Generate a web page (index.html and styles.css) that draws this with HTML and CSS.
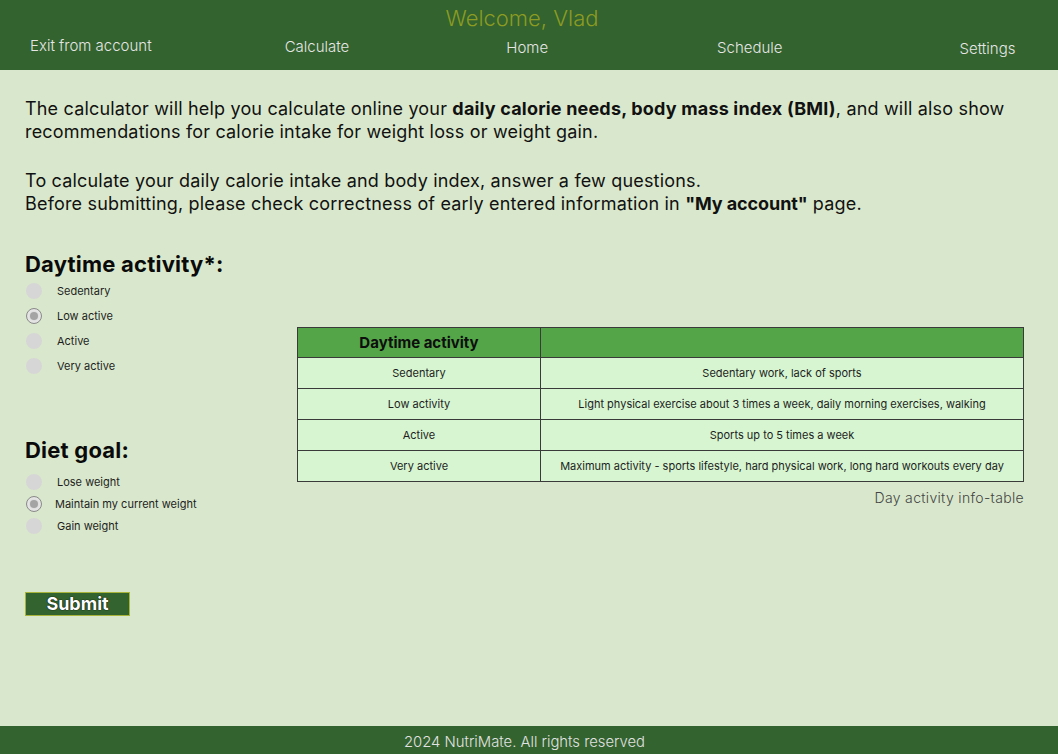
FILE: index.html
```html
<!DOCTYPE html>
<html lang="en">
<head>
<meta charset="utf-8">
<title>NutriMate - Calculate</title>
<link rel="stylesheet" href="styles.css">
</head>
<body>
<header class="topbar">
  <div class="welcome">Welcome, Vlad</div>
  <nav class="nav">
    <a class="nav-item nav-exit" href="#">Exit from account</a>
    <a class="nav-item nav-calc" href="#">Calculate</a>
    <a class="nav-item nav-home" href="#">Home</a>
    <a class="nav-item nav-sched" href="#">Schedule</a>
    <a class="nav-item nav-settings" href="#">Settings</a>
  </nav>
</header>

<main class="main">
  <p class="intro">The calculator will help you calculate online your <b>daily calorie needs, body mass index (BMI)</b>, and will also show recommendations for calorie intake for weight loss or weight gain.</p>
  <p class="intro intro-2">To calculate your daily calorie intake and body index, answer a few questions.<br>Before submitting, please check correctness of early entered information in <b class="acct">"My account"</b> page.</p>

  <div class="content">
    <form class="forms">
      <h2 class="group-title">Daytime activity*:</h2>
      <div class="radio-list activity">
        <label class="radio"><span class="dot"></span><span class="lbl">Sedentary</span></label>
        <label class="radio"><span class="dot checked"></span><span class="lbl">Low active</span></label>
        <label class="radio"><span class="dot"></span><span class="lbl">Active</span></label>
        <label class="radio"><span class="dot"></span><span class="lbl">Very active</span></label>
      </div>

      <h2 class="group-title diet-title">Diet goal:</h2>
      <div class="radio-list diet">
        <label class="radio"><span class="dot"></span><span class="lbl">Lose weight</span></label>
        <label class="radio"><span class="dot checked"></span><span class="lbl lbl-tight">Maintain my current weight</span></label>
        <label class="radio"><span class="dot"></span><span class="lbl">Gain weight</span></label>
      </div>

      <button type="button" class="submit">Submit</button>
    </form>

    <div class="table-wrap">
      <table class="info">
        <thead>
          <tr><th class="col-a">Daytime activity</th><th></th></tr>
        </thead>
        <tbody>
          <tr><td>Sedentary</td><td>Sedentary work, lack of sports</td></tr>
          <tr><td>Low activity</td><td>Light physical exercise about 3 times a week, daily morning exercises, walking</td></tr>
          <tr><td>Active</td><td>Sports up to 5 times a week</td></tr>
          <tr><td>Very active</td><td>Maximum activity - sports lifestyle, hard physical work, long hard workouts every day</td></tr>
        </tbody>
      </table>
      <div class="caption">Day activity info-table</div>
    </div>
  </div>
</main>

<footer class="footer">2024 NutriMate. All rights reserved</footer>
</body>
</html>
```

FILE: styles.css
```css
* { box-sizing: border-box; }

html, body { height: 100%; }

body {
  margin: 0;
  min-height: 100vh;
  display: flex;
  flex-direction: column;
  background: #d9e8cc;
  font-family: Inter, "Noto Sans", sans-serif;
  color: #111;
}

.topbar {
  background: #33632e;
  height: 70px;
  padding-top: 5px;
  flex-shrink: 0;
}

.welcome {
  text-align: center;
  font-size: 22px;
  line-height: 26px;
  font-weight: 300;
  color: #8c9b22;
  padding-right: 14px;
}

.nav {
  display: flex;
  align-items: center;
  margin-top: 7px;
  padding-left: 30px;
  height: 18px;
}

.nav-item {
  color: #e6e6e6;
  text-decoration: none;
  font-size: 15px;
  line-height: 18px;
  font-weight: 300;
}

.nav-calc { margin-left: 133px; }
.nav-home { margin-left: 157px; position: relative; top: 1px; }
.nav-sched { margin-left: 169px; position: relative; top: 1px; }
.nav-settings { margin-left: 177px; position: relative; top: 2px; }
.nav-exit { position: relative; top: -1px; }

.main {
  flex: 1;
  padding: 27px 34px 0 25px;
}

.intro {
  margin: 0;
  font-size: 18px;
  line-height: 23px;
  color: #111;
  letter-spacing: 0.18px;
}

.intro b { font-weight: 700; }
.intro b.acct { letter-spacing: -0.1px; }

.intro-2 { margin-top: 26px; }

.content {
  display: flex;
  align-items: flex-start;
  margin-top: 36px;
}

.forms {
  width: 272px;
  flex-shrink: 0;
  margin: 0;
}

.group-title {
  margin: 0;
  font-size: 22px;
  line-height: 26px;
  font-weight: 700;
  color: #0a0a0a;
  letter-spacing: 0.22px;
}

.radio-list { display: flex; flex-direction: column; }

.activity { margin-top: 1px; }
.activity .radio { height: 25px; }

.diet-title { margin-top: 59px; }
.diet { margin-top: 8px; }
.diet .radio { height: 22px; }

.radio {
  display: flex;
  align-items: center;
  font-size: 11px;
  color: #1e1e1e;
}

.dot {
  width: 16px;
  height: 16px;
  border-radius: 50%;
  background: #d6d6d6;
  margin-left: 1px;
  flex-shrink: 0;
  position: relative;
}

.dot.checked {
  background: #dedede;
  border: 1px solid #8a8a8a;
  box-shadow: inset 0 0 0 2px #e4e4e4;
}

.dot.checked::after {
  content: "";
  position: absolute;
  left: 3px;
  top: 3px;
  width: 8px;
  height: 8px;
  border-radius: 50%;
  background: #a4a4a4;
}

.lbl { margin-left: 15px; }
.lbl-tight { margin-left: 13px; }

.submit {
  display: block;
  margin-top: 55px;
  width: 105px;
  height: 24px;
  padding: 0;
  background: #33632e;
  border: 1px solid #a9b43a;
  color: #fff;
  font-family: Inter, "Noto Sans", sans-serif;
  font-size: 18px;
  font-weight: 700;
  line-height: 22px;
  text-shadow: 0 0 1px #000, 0 0 1px #000;
  cursor: pointer;
}

.table-wrap {
  flex: 1;
  margin-top: 76px;
}

.info {
  width: 100%;
  border-collapse: collapse;
  border: 1px solid #3a3a3a;
}

.info th {
  background: #53a548;
  height: 30px;
  font-size: 15px;
  font-weight: 700;
  color: #0e0e0e;
  border: 1px solid #3a3a3a;
  padding: 0;
}

.info th.col-a { width: 243px; }

.info td {
  background: #d6f5d0;
  height: 31px;
  font-size: 11px;
  color: #1e1e1e;
  text-align: center;
  border: 1px solid #3a3a3a;
  padding: 0;
}

.caption {
  text-align: right;
  margin-top: 7px;
  font-size: 14px;
  line-height: 18px;
  font-weight: 300;
  color: #444;
  letter-spacing: 0.33px;
}

.footer {
  flex-shrink: 0;
  height: 28px;
  background: #33632e;
  color: #e2e2e2;
  text-align: center;
  font-size: 14.8px;
  line-height: 32px;
  font-weight: 300;
  padding-right: 9px;
}
```
